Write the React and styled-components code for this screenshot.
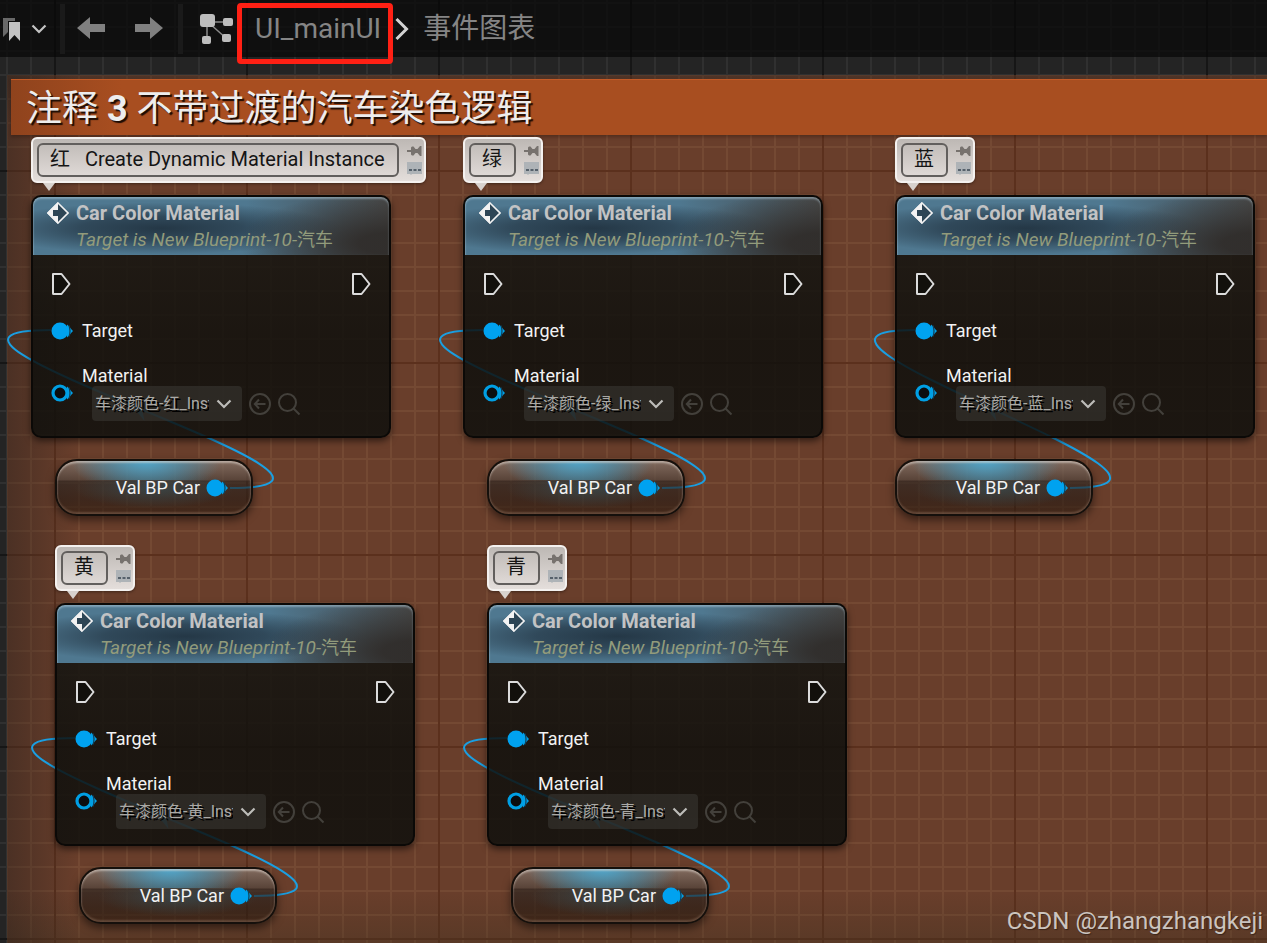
import React from "react";
import styled, { createGlobalStyle, css } from "styled-components";

const GlobalStyle = createGlobalStyle`
  * {
    box-sizing: border-box;
  }

  body {
    margin: 0;
    background: #232323;
    font-family: Roboto, "Noto Sans CJK SC", sans-serif;
  }

  button {
    padding: 0;
    border: none;
    background: none;
    cursor: pointer;
  }

  svg {
    display: block;
  }
`;

// 24px cells with a darker line every 8 cells
const gridLines = (minor, major) => css`
  background-image:
    linear-gradient(to right, ${major} 2px, transparent 2px),
    linear-gradient(to bottom, ${major} 2px, transparent 2px),
    linear-gradient(to right, ${minor} 2px, transparent 2px),
    linear-gradient(to bottom, ${minor} 2px, transparent 2px);
  background-size: 192px 192px, 192px 192px, 24px 24px, 24px 24px;
`;

const Editor = styled.div`
  position: relative;
  display: flex;
  flex-direction: column;
  min-height: 100vh;
  overflow: hidden;
  background-color: #242424;
  ${gridLines("#303030", "#161616")}
  background-position: 54px 0, 0 170px, 6px 0, 0 2px;
`;

const Toolbar = styled.header`
  position: relative;
  z-index: 2;
  display: flex;
  align-items: center;
  height: 57px;
  padding-left: 3px;
  background: rgba(8, 8, 8, 0.75);
`;

const ToolButton = styled.button`
  display: flex;
  align-items: center;
  gap: 10px;
  color: #808080;
`;

const ForwardButton = styled(ToolButton)`
  margin-left: 30px;
`;

const Divider = styled.span`
  width: 5px;
  height: 50px;
  margin: 0 ${(props) => props.$right}px 0 ${(props) => props.$left}px;
  background: #1a1a1a;
`;

const Breadcrumb = styled.nav`
  display: flex;
  align-items: center;
  gap: 14px;
  margin-left: 21px;
  font-size: 28px;
  line-height: 40px;
  color: #858585;

  a {
    color: inherit;
    text-decoration: none;
    white-space: nowrap;
  }
`;

const MarkedLink = styled.a`
  position: relative;

  &::after {
    content: "";
    position: absolute;
    inset: -6px -12px -15px -18px;
    border: 5px solid #ff2014;
    border-radius: 4px;
  }
`;

const Comment = styled.section`
  position: relative;
  flex: 1;
  margin: 18px 0 0 7px;
  padding: 4px 0 0 4px;
  background-color: #693e2b;
  ${gridLines("#744933", "#5b301d")}
  background-position: 47px 0, 0 95px, -1px 0, 0 -1px;

  &::before {
    content: "";
    position: absolute;
    inset: 0;
    background:
      linear-gradient(to right, rgba(30, 28, 26, 0.4), transparent 70px),
      linear-gradient(to bottom, rgba(40, 36, 32, 0.4), transparent 50px),
      linear-gradient(to top, rgba(60, 48, 30, 0.35), transparent 50px);
  }
`;

const CommentTitle = styled.h1`
  position: relative;
  margin: 0;
  padding: 3px 15px 0;
  border-top: 1px solid #c25a27;
  background: linear-gradient(to right, #8f431d, #a84e20 110px);
  box-shadow: 0 2px 3px rgba(40, 15, 5, 0.35);
  color: #ededed;
  font-size: 36px;
  font-weight: 400;
  line-height: 52px;
  white-space: nowrap;
  text-shadow: 2px 2px 1px #1d0c04;
`;

const Wires = styled.svg`
  position: absolute;
  top: 0;
  left: 0;
  width: 100%;
  height: 100%;
  overflow: visible;
`;

const Placed = styled.div`
  position: absolute;
  left: ${(props) => props.$x}px;
  top: ${(props) => props.$y}px;
`;

const Bubble = styled.div`
  position: relative;
  display: flex;
  align-items: center;
  gap: 8px;
  height: 46px;
  padding: 0 2px 0 4px;
  border: 2px solid #f4f1ef;
  border-radius: 6px;
  background: linear-gradient(#bdb8b4, #e4dedb);
  box-shadow: 0 1px 3px rgba(0, 0, 0, 0.4);

  &::after {
    content: "";
    position: absolute;
    top: 44px;
    left: 10px;
    border: solid transparent;
    border-width: 8px 6px 0;
    border-top-color: #d8d2ce;
  }
`;

const BubbleInput = styled.input`
  width: ${(props) => (props.$wide ? 362 : 47)}px;
  height: 34px;
  padding: 0 11px 5px;
  border: 2px solid #625f5d;
  border-radius: 6px;
  background: transparent;
  color: #151515;
  font: inherit;
  font-size: 20px;
`;

const BubbleTools = styled.div`
  display: flex;
  flex-direction: column;
  gap: 5px;
`;

const NodeBox = styled.article`
  width: 360px;
  border: 2px solid #0b0907;
  border-radius: 10px;
  background: linear-gradient(rgba(22, 23, 19, 0.85), rgba(14, 15, 12, 0.85) 60%);
  box-shadow: 0 3px 7px rgba(0, 0, 0, 0.55);
`;

const NodeHeader = styled.header`
  display: grid;
  grid-template-columns: 22px 1fr;
  column-gap: 7px;
  align-items: center;
  height: 58px;
  padding: 4px 14px 0;
  border-radius: 8px 8px 0 0;
  background:
    radial-gradient(ellipse 150px 52px at 100% 80%, rgba(48, 45, 43, 0.95) 20%, transparent),
    radial-gradient(ellipse 180px 26px at 36% 54%, rgba(34, 52, 66, 0.95), rgba(38, 57, 72, 0.75) 45%, transparent),
    linear-gradient(to right, #4f7890, #4f7890 60%, #4b5f6b 82%, #4a4a49);
  box-shadow: inset 0 2px 2px rgba(190, 215, 230, 0.45), inset 1px 0 1px rgba(190, 215, 230, 0.2);
`;

const NodeTitle = styled.h2`
  margin: 0;
  color: #c2c3c4;
  font-size: 20px;
  font-weight: 700;
  line-height: 24px;
`;

const NodeSubtitle = styled.p`
  grid-column: 2;
  margin: 0;
  color: #929b7b;
  font-size: 19px;
  font-style: italic;
  line-height: 30px;
  white-space: nowrap;

  span {
    font-size: 18px;
    font-style: normal;
  }
`;

const NodeBody = styled.div`
  display: flex;
  flex-direction: column;
  gap: 22px;
  padding: 17px 18px 15px;
  color: #f2f2f2;
  font-size: 18px;
`;

const ExecRow = styled.div`
  display: flex;
  justify-content: space-between;
  height: 25px;
`;

const PinRow = styled.div`
  display: flex;
  align-items: center;
  gap: 9px;
  line-height: 24px;
`;

const MaterialLabel = styled.label`
  display: block;
  padding-top: 1px;
  line-height: 20px;
`;

const AssetRow = styled.div`
  display: flex;
  align-items: center;
  margin-left: 10px;
`;

const AssetPicker = styled.div`
  display: flex;
  align-items: center;
  width: 150px;
  height: 35px;
  margin-right: 6px;
  padding-left: 3px;
  border-radius: 4px;
  background: rgba(62, 60, 56, 0.5);
`;

const AssetSelect = styled.select`
  appearance: none;
  width: 114px;
  margin-right: 7px;
  padding: 0;
  border: none;
  background: transparent;
  color: #aaa9a6;
  font: inherit;
  font-size: 16px;
  line-height: 24px;
  text-shadow: 2px 2px 0 #000;
`;

const AssetButton = styled.button`
  margin-right: 5px;
  color: #43403b;
`;

const VariableNode = styled.article`
  display: flex;
  align-items: center;
  justify-content: flex-end;
  gap: 6px;
  width: 198px;
  height: 57px;
  padding-right: 23px;
  border: 2px solid #15100c;
  border-radius: 22px;
  background:
    radial-gradient(ellipse 75px 34px at 46% 0, rgba(76, 170, 210, 0.95), rgba(72, 150, 185, 0.6) 50%, transparent) 0 0 / 100% 19px no-repeat,
    radial-gradient(ellipse 80px 20px at 50% 52%, rgba(54, 84, 92, 0.6), transparent),
    linear-gradient(
      rgba(138, 122, 112, 0.75),
      rgba(82, 70, 62, 0.7) 19px,
      rgba(44, 38, 34, 0.68) 20px,
      rgba(36, 26, 20, 0.62) 38px,
      rgba(44, 26, 14, 0.62)
    );
  background-clip: padding-box;
  box-shadow: inset 0 2px 2px rgba(225, 218, 212, 0.55), inset 0 -2px 2px rgba(180, 150, 130, 0.3), 0 4px 8px rgba(0, 0, 0, 0.5);
  color: #f2f2f2;
  font-size: 18px;
`;

const Watermark = styled.p`
  position: absolute;
  right: 4px;
  bottom: 4px;
  margin: 0;
  color: #cbc4bf;
  font-size: 24px;
  line-height: 36px;
  text-shadow: 1px 1px 1px #3a2419;
`;

const NODES = [
  { id: "red", x: 24, y: 120, note: "红   Create Dynamic Material Instance", color: "红", wide: true, varX: 48, reach: 201 },
  { id: "green", x: 456, y: 120, note: "绿", color: "绿", varX: 480, reach: 201 },
  { id: "blue", x: 888, y: 120, note: "蓝", color: "蓝", varX: 888, reach: 185 },
  { id: "yellow", x: 48, y: 528, note: "黄", color: "黄", varX: 72, reach: 201 },
  { id: "cyan", x: 480, y: 528, note: "青", color: "青", varX: 504, reach: 201 },
];

const ExecPin = () => (
  <svg width="20" height="24" viewBox="0 0 20 24" fill="#12100c" stroke="#dcdcdc" strokeWidth="2" strokeLinejoin="round">
    <path d="M2 2h8.500L18.500 12 10.500 22H2.500Q2 22 2 21.500z" />
  </svg>
);

const DataPin = ({ hollow }) => (
  <svg width="22" height="18" viewBox="0 0 22 18">
    <path d="M16 2.500C18.500 4.500 20 7 22 9c-2 2-3.500 4.500-6 6.500z" fill="#00a2ea" />
    <path d="M18 3.500q2 5.500 0 11" fill="none" stroke="#123f57" strokeWidth="1.200" />
    {hollow ? (
      <circle cx="9" cy="9" r="7" fill="#0b0d0f" stroke="#009fe4" strokeWidth="3.200" />
    ) : (
      <circle cx="9" cy="9" r="8.500" fill="#00a2f0" />
    )}
  </svg>
);

const Chevron = ({ color = "#bdbcb9" }) => (
  <svg width="16" height="10" viewBox="0 0 16 10" fill="none" stroke={color} strokeWidth="2.200">
    <path d="M1.500 1.500 8 8l6.500-6.500" />
  </svg>
);

const EventIcon = () => (
  <svg width="22" height="22" viewBox="0 0 22 22">
    <path d="M11 1 21 11 11 21 1 11z" fill="#2d4555" stroke="#f2f2f2" strokeWidth="1.600" />
    <path d="M0 11 11 0v8H6v6h5v8z" fill="#f2f2f2" />
  </svg>
);

const PinIcon = () => (
  <svg width="15" height="12" viewBox="0 0 15 12" fill="#77726e">
    <path d="M0 5h4V2.500L5 1.500h1.500L8.500 4h2L13 1h1.500v10H13l-2.500-3h-2l-2 2.500H5l-1-1V7H0z" />
  </svg>
);

const VisibleIcon = () => (
  <svg width="15" height="13" viewBox="0 0 15 13">
    <path d="M0 0h15v12H5l-1 1-1-1H0z" fill="#aeb3b7" />
    <path d="M2 7h3v2H2zM6.500 7h3v2h-3zM11 7h3v2h-3z" fill="#56616b" />
  </svg>
);

const BlueprintNode = ({ node }) => (
  <NodeBox>
    <NodeHeader>
      <EventIcon />
      <NodeTitle>Car Color Material</NodeTitle>
      <NodeSubtitle>
        Target is New Blueprint-10-<span>汽车</span>
      </NodeSubtitle>
    </NodeHeader>
    <NodeBody>
      <ExecRow>
        <ExecPin />
        <ExecPin />
      </ExecRow>
      <PinRow>
        <DataPin />
        <span>Target</span>
      </PinRow>
      <PinRow>
        <DataPin hollow />
        <div>
          <MaterialLabel htmlFor={`material-${node.id}`}>Material</MaterialLabel>
          <AssetRow>
            <AssetPicker>
              <AssetSelect id={`material-${node.id}`}>
                <option>车漆颜色-{node.color}_Inst</option>
              </AssetSelect>
              <Chevron />
            </AssetPicker>
            <AssetButton aria-label="Use selected asset">
              <svg width="24" height="24" viewBox="0 0 24 24" fill="none" stroke="currentColor" strokeWidth="2">
                <circle cx="12" cy="12" r="10" />
                <path d="M17.500 12H7.500M11 7.500 6.800 12l4.200 4.500" />
              </svg>
            </AssetButton>
            <AssetButton aria-label="Browse to asset">
              <svg width="24" height="24" viewBox="0 0 24 24" fill="none" stroke="currentColor" strokeWidth="2">
                <circle cx="10.500" cy="10.500" r="8.500" />
                <path d="m16.500 16.500 6 6" />
              </svg>
            </AssetButton>
          </AssetRow>
        </div>
      </PinRow>
    </NodeBody>
  </NodeBox>
);

const Wire = ({ node }) => {
  const startX = node.varX + 175;
  const startY = node.y + 293;
  const endX = node.x + 20;
  const endY = node.y + 135;
  const midX = (startX + endX) / 2;
  const midY = (startY + endY) / 2;

  return (
    <g fill="none" stroke="#1a9fe2" strokeWidth="2">
      <path
        d={`M${startX} ${startY}C${startX + node.reach} ${startY} ${endX - node.reach} ${endY} ${endX} ${endY}`}
      />
      <path d={`M${midX - 9} ${midY - 4}l13-3-3 4 3 15z`} fill="#1a9fe2" stroke="none" />
    </g>
  );
};

const App = () => {
  return (
    <Editor>
      <GlobalStyle />
      <Toolbar>
        <ToolButton aria-label="Bookmarks">
          <svg width="18" height="26" viewBox="0 0 18 26">
            <path d="M0 2h12v3H5v11l-5 5z" fill="#696969" />
            <path d="M6 6h11v19l-5.500-6L6 25z" fill="#c2c2c2" />
          </svg>
          <Chevron color="#c4c4c4" />
        </ToolButton>
        <Divider $left={13} $right={12} />
        <ToolButton aria-label="Back">
          <svg width="28" height="24" viewBox="0 0 28 24" fill="currentColor">
            <path d="M0 11 13 0v7h15v8H13v7z" />
          </svg>
        </ToolButton>
        <ForwardButton aria-label="Forward">
          <svg width="28" height="24" viewBox="0 0 28 24" fill="currentColor">
            <path d="M28 11 15 0v7H0v8h15v7z" />
          </svg>
        </ForwardButton>
        <Divider $left={15} $right={17} />
        <svg width="34" height="30" viewBox="0 0 34 30" fill="#bdbdbd">
          <path d="M8 8h20M7 8v18M9 9l18 16" stroke="#8a8a8a" strokeWidth="1.500" />
          <rect x="0" y="0" width="15" height="13" rx="3" />
          <rect x="23" y="4" width="10" height="8" rx="2" />
          <rect x="2" y="22" width="9" height="8" rx="2" />
          <rect x="22" y="20" width="9" height="8" rx="2" />
        </svg>
        <Breadcrumb>
          <MarkedLink href="#main">UI_mainUI</MarkedLink>
          <svg width="14" height="24" viewBox="0 0 14 24" fill="none" stroke="#d2d2d2" strokeWidth="3">
            <path d="m1.500 2 10 10-10 10" />
          </svg>
          <a href="#event-graph">事件图表</a>
        </Breadcrumb>
      </Toolbar>

      <Comment>
        <CommentTitle>
          注释 <b>3</b> 不带过渡的汽车染色逻辑
        </CommentTitle>
        <Wires aria-hidden="true">
          {NODES.map((node) => (
            <Wire key={node.id} node={node} />
          ))}
        </Wires>
        {NODES.map((node) => (
          <React.Fragment key={node.id}>
            <Placed $x={node.x} $y={node.y - 58}>
              <Bubble>
                <BubbleInput aria-label="Node comment" defaultValue={node.note} $wide={node.wide} />
                <BubbleTools>
                  <button aria-label="Pin comment">
                    <PinIcon />
                  </button>
                  <button aria-label="Toggle comment">
                    <VisibleIcon />
                  </button>
                </BubbleTools>
              </Bubble>
            </Placed>
            <Placed $x={node.x} $y={node.y}>
              <BlueprintNode node={node} />
            </Placed>
            <Placed $x={node.varX} $y={node.y + 264}>
              <VariableNode>
                <span>Val BP Car</span>
                <DataPin />
              </VariableNode>
            </Placed>
          </React.Fragment>
        ))}
      </Comment>
      <Watermark>CSDN @zhangzhangkeji</Watermark>
    </Editor>
  );
};

export default App;
